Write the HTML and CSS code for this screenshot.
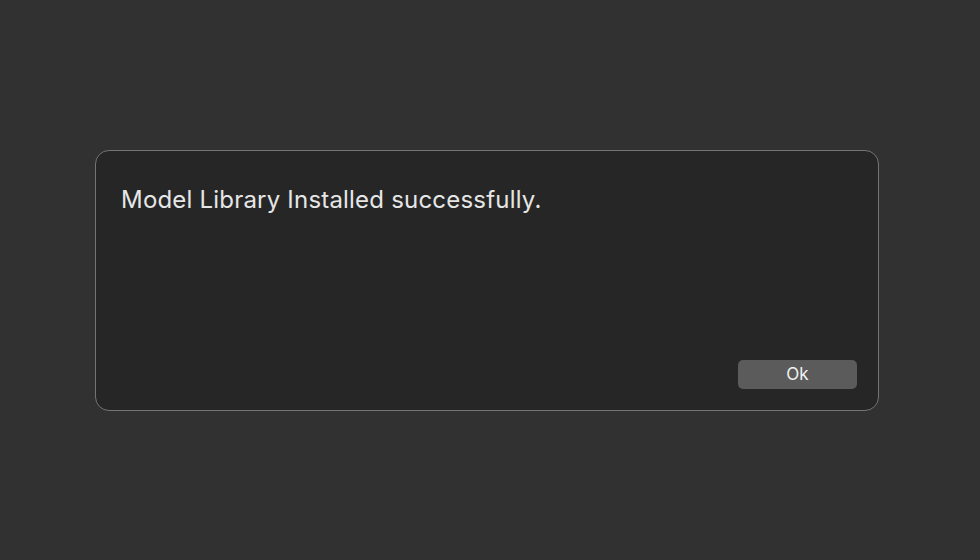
FILE: index.html
```html
<!DOCTYPE html>
<html>
<head>
<meta charset="utf-8">
<link rel="stylesheet" href="styles.css">
</head>
<body>
<div class="page">
  <div class="dialog">
    <p class="message">Model Library Installed successfully.</p>
    <div class="actions">
      <button class="btn">Ok</button>
    </div>
  </div>
</div>
</body>
</html>
```

FILE: styles.css
```css
html, body {
  margin: 0;
  padding: 0;
  background: #313131;
  width: 980px;
  height: 560px;
  overflow: hidden;
}
.page {
  height: 560px;
  display: flex;
  align-items: center;
  padding-left: 95px;
  box-sizing: border-box;
}
.dialog {
  width: 784px;
  height: 261px;
  box-sizing: border-box;
  border: 1px solid #747474;
  border-radius: 14px;
  background: #262626;
  display: flex;
  flex-direction: column;
  justify-content: space-between;
  padding: 33px 21px 21px 25px;
}
.message {
  margin: 0;
  font-family: Inter, "Noto Sans", sans-serif;
  font-size: 24px;
  line-height: 32px;
  color: #e6e6e6;
  letter-spacing: 0.2px;
}
.actions {
  display: flex;
  justify-content: flex-end;
}
.btn {
  width: 119px;
  height: 29px;
  border: none;
  border-radius: 5px;
  background: #5b5b5b;
  color: #f2f2f2;
  font-family: Inter, "Noto Sans", sans-serif;
  font-size: 17px;
  padding: 0;
}
```
